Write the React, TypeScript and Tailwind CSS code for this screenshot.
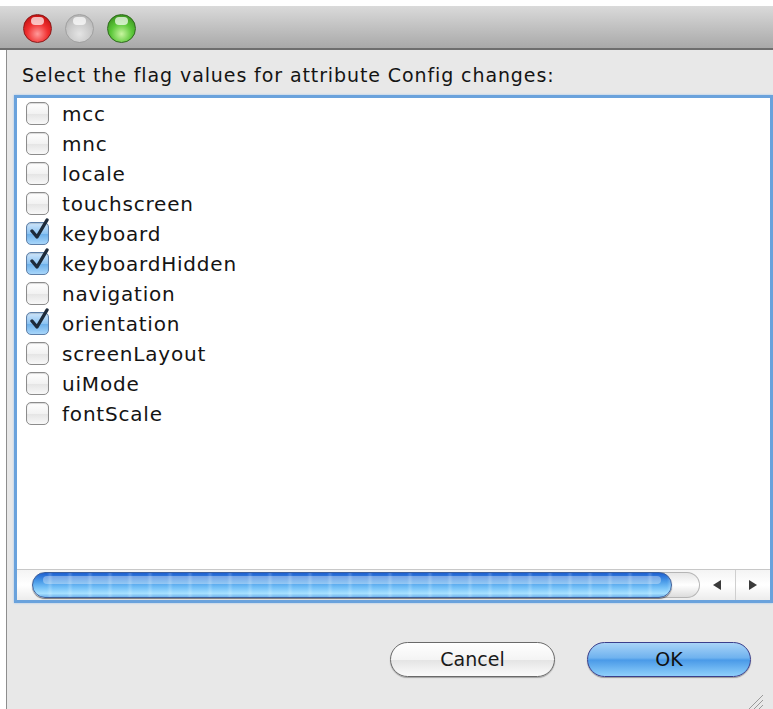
import React from "react";

type Flag = { name: string; on: boolean };

const flags: Flag[] = [
  { name: "mcc", on: false },
  { name: "mnc", on: false },
  { name: "locale", on: false },
  { name: "touchscreen", on: false },
  { name: "keyboard", on: true },
  { name: "keyboardHidden", on: true },
  { name: "navigation", on: false },
  { name: "orientation", on: true },
  { name: "screenLayout", on: false },
  { name: "uiMode", on: false },
  { name: "fontScale", on: false },
];

const font = { fontFamily: '"DejaVu Sans", "Liberation Sans", sans-serif' };

function Light({ kind }: { kind: "red" | "gray" | "green" }) {
  const cls =
    kind === "red"
      ? "bg-[radial-gradient(circle_at_50%_70%,#ff9a9a_0%,#f03030_45%,#b00000_100%)] border-[#8a1a1a]"
      : kind === "green"
      ? "bg-[radial-gradient(circle_at_50%_70%,#c8f5a0_0%,#5cc83a_45%,#2a7a10_100%)] border-[#2f6a1e]"
      : "bg-[radial-gradient(circle_at_50%_70%,#e4e4e4_0%,#c9c9c9_50%,#a9a9a9_100%)] border-[#a0a0a0]";
  return (
    <div className={`relative w-[29px] h-[29px] rounded-full border ${cls}`}>
      <div className="absolute left-[7px] top-[2px] w-[13px] h-[8px] rounded-full bg-white/70" />
    </div>
  );
}

function Check({ on }: { on: boolean }) {
  return (
    <div
      className={`relative w-[23px] h-[23px] rounded-[5px] border shadow-[inset_0_1px_1px_rgba(0,0,0,0.15)] ${
        on
          ? "border-[#5d7fa8] bg-[linear-gradient(#cfe6fb,#8ec4f2_50%,#6aaee9_51%,#a8d6fa)]"
          : "border-[#8c8c8c] bg-[linear-gradient(#ffffff,#f2f2f2_50%,#e4e4e4_51%,#f8f8f8)]"
      }`}
    >
      {on && (
        <svg className="absolute left-[2px] top-[-5px]" width="22" height="24" viewBox="0 0 22 24">
          <path d="M3 13 L8 19 L18 2" fill="none" stroke="#1d2a3a" strokeWidth="3.4" strokeLinecap="round" strokeLinejoin="round" />
        </svg>
      )}
    </div>
  );
}

export default function App() {
  return (
    <div className="w-[773px] h-[709px] bg-white overflow-hidden flex flex-col" style={font}>
      <div className="h-[6px] bg-white shrink-0" />
      {/* title bar */}
      <div className="h-[44px] shrink-0 flex items-center gap-[13px] pl-[23px] pt-[2px] bg-[linear-gradient(#dadada,#a9a9a9)] border-b-2 border-[#6e6e6e]">
        <Light kind="red" />
        <Light kind="gray" />
        <Light kind="green" />
      </div>
      {/* window body */}
      <div className="flex-1 flex bg-white">
        <div className="w-[6px] shrink-0" />
        <div className="relative flex-1 flex flex-col bg-[#e8e8e8] border-l border-[#8e8e8e] pl-[7px]">
          <div className="h-[45px] pt-[14px] pl-[8px] text-[19px] tracking-[0.9px] text-[#141414] leading-[22px]">
            Select the flag values for attribute Config changes:
          </div>
          <div className="h-[508px] border-[3px] border-[#6aa2dc] shadow-[0_0_2px_#9cc4ee] bg-white flex flex-col">
            <div className="flex-1 flex flex-col">
              {flags.map((f) => (
                <div key={f.name} className="h-[30px] flex items-center pl-[9px] gap-[13px]">
                  <Check on={f.on} />
                  <span className="text-[20px] tracking-[0.8px] text-[#141414] leading-none mt-[1px]">{f.name}</span>
                </div>
              ))}
            </div>
            {/* horizontal scroll bar */}
            <div className="h-[31px] shrink-0 flex items-center border-t border-[#c8c8c8] bg-[linear-gradient(#f4f4f4,#ffffff_50%,#ececec)]">
              <div className="w-[15px] h-full" />
              <div className="relative z-10 w-[640px] h-[26px] rounded-full border border-[#3d5f9a] shadow-[0_1px_1px_rgba(0,0,0,0.5)] bg-[linear-gradient(#1e5fd0,#4a9be8_35%,#74c0f7_60%,#a6e0ff_85%,#6fb3ee)] overflow-hidden">
                <div className="absolute left-[10px] right-[10px] top-[3px] h-[8px] rounded-full bg-white/35" />
                <div className="absolute inset-0 bg-[repeating-linear-gradient(90deg,rgba(255,255,255,0)_0px,rgba(255,255,255,0)_14px,rgba(255,255,255,0.18)_17px,rgba(255,255,255,0)_20px)]" />
              </div>
              <div className="w-[42px] h-[26px] -ml-[14px] rounded-r-full border border-l-0 border-[#b5b5b5] bg-[linear-gradient(#e6e6e6,#ffffff_50%,#dcdcdc)]" />
              <div className="flex-1 flex items-center h-full">
                <div className="flex-1 flex justify-center">
                  <div className="w-0 h-0 border-y-[5px] border-y-transparent border-r-[8px] border-r-[#3a3a3a]" />
                </div>
                <div className="w-px h-full bg-[#cfcfcf]" />
                <div className="flex-1 flex justify-center">
                  <div className="w-0 h-0 border-y-[5px] border-y-transparent border-l-[8px] border-l-[#3a3a3a]" />
                </div>
              </div>
            </div>
          </div>
          {/* buttons */}
          <div className="flex justify-end gap-[32px] pr-[22px] pt-[39px]">
            <button className="w-[165px] h-[35px] rounded-full border border-[#6a6a6a] shadow-[0_1px_1px_rgba(0,0,0,0.3)] bg-[linear-gradient(#ffffff,#f4f4f4_50%,#e4e4e4_51%,#fbfbfb)] text-[19px] text-[#1a1a1a]">
              Cancel
            </button>
            <button className="w-[164px] h-[35px] rounded-full border border-[#3b3f8c] shadow-[0_1px_1px_rgba(0,0,0,0.35)] bg-[linear-gradient(#a9d4f7,#6fb2ef_45%,#4a9ae8_52%,#8fd0fb)] text-[19px] text-[#101010]">
              OK
            </button>
          </div>
          {/* resize grip */}
          <svg className="absolute right-[10px] bottom-0" width="18" height="18" viewBox="0 0 18 18">
            <path d="M18 4 L4 18 M18 9 L9 18 M18 14 L14 18" stroke="#9a9a9a" strokeWidth="1" />
          </svg>
        </div>
      </div>
    </div>
  );
}
